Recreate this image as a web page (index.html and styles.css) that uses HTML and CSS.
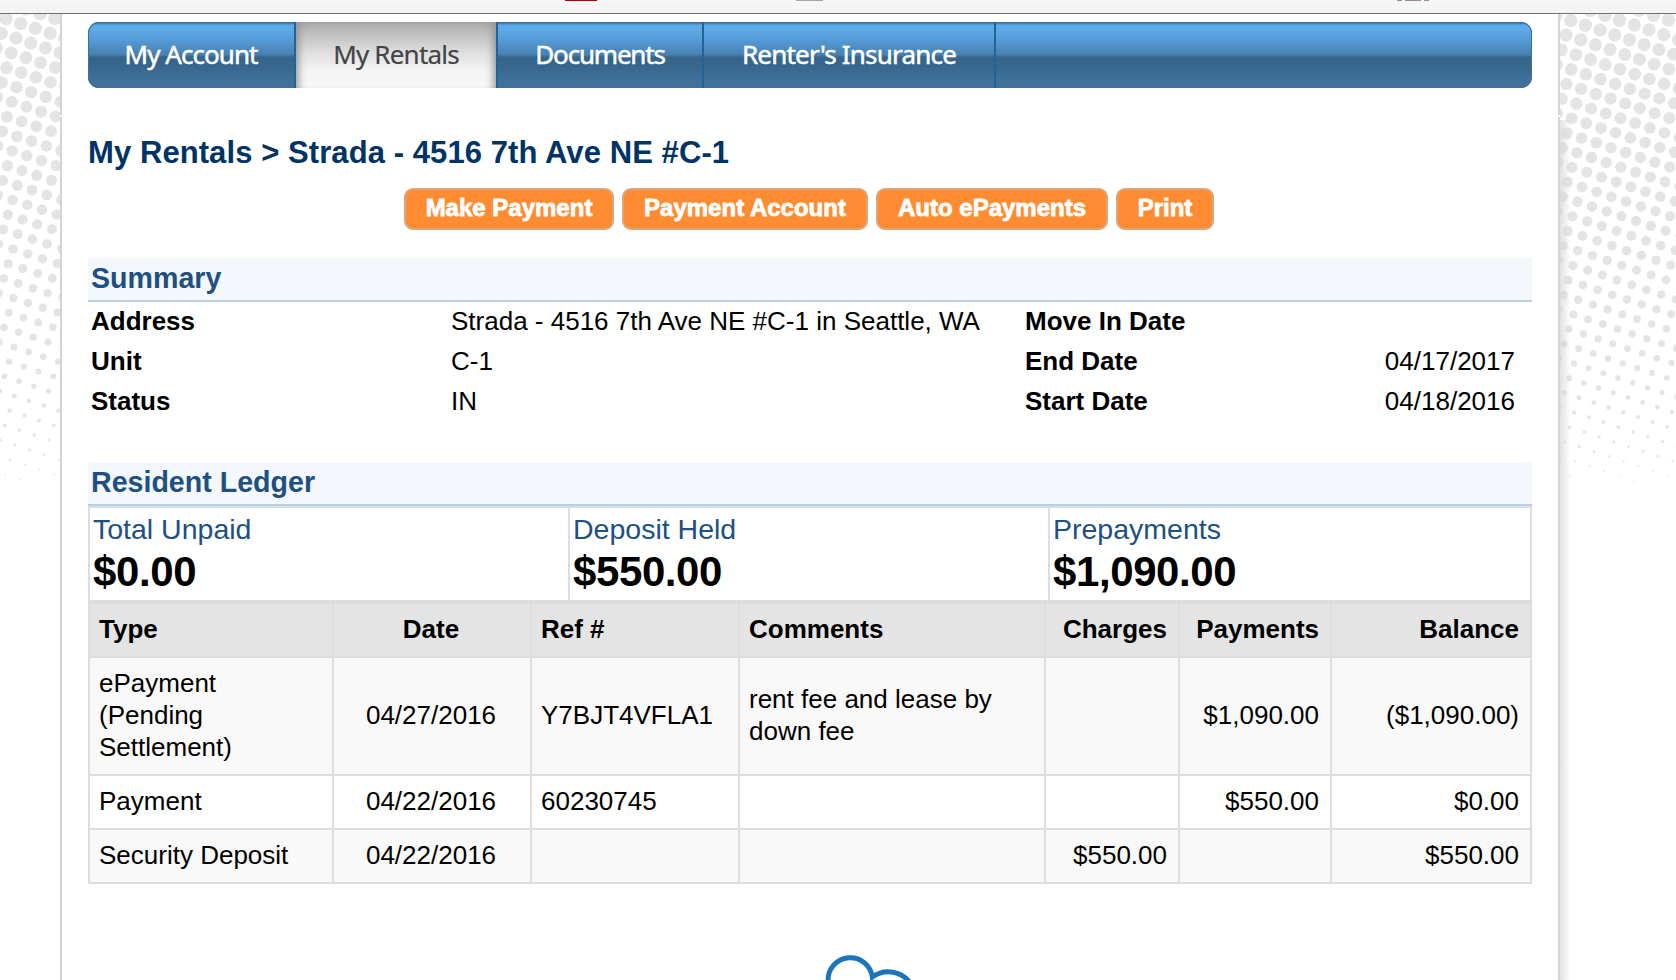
FILE: index.html
```html
<!DOCTYPE html>
<html lang="en">
<head>
<meta charset="utf-8">
<title>My Rentals</title>
<link rel="stylesheet" href="styles.css">
</head>
<body>
<div class="toolbar">
  <svg width="1676" height="13" viewBox="0 0 1676 13">
    <rect x="565" y="0" width="32" height="1" fill="#a30d10"/>
    <rect x="796" y="0" width="27" height="1" fill="#a5a5a5"/>
    <path d="M1397 0h5v1h-5zM1405 0h16v1h-16zM1424 0h5v1h-5z" fill="#9a8c86"/>
  </svg>
</div>
<div class="backdrop">
  <svg class="dots" id="dots" width="1676" height="966" viewBox="0 14 1676 966"></svg>
  <main class="page">
    <nav class="nav">
      <a class="tab tab-account"><span>My Account</span></a>
      <a class="tab tab-rentals active"><span>My Rentals</span></a>
      <a class="tab tab-documents"><span>Documents</span></a>
      <a class="tab tab-insurance"><span>Renter's Insurance</span></a>
    </nav>
    <h1 class="title"><span>My Rentals &gt; Strada - 4516 7th Ave NE #C-1</span></h1>
    <div class="actions">
      <button class="btn btn-make"><span>Make Payment</span></button>
      <button class="btn btn-account"><span>Payment Account</span></button>
      <button class="btn btn-auto"><span>Auto ePayments</span></button>
      <button class="btn btn-print"><span>Print</span></button>
    </div>
    <h2 class="section"><span>Summary</span></h2>
    <dl class="summary">
      <dt>Address</dt><dd><span>Strada - 4516 7th Ave NE #C-1 in Seattle, WA</span></dd><dt>Move In Date</dt><dd></dd>
      <dt>Unit</dt><dd>C-1</dd><dt>End Date</dt><dd class="num">04/17/2017</dd>
      <dt>Status</dt><dd>IN</dd><dt>Start Date</dt><dd class="num">04/18/2016</dd>
    </dl>
    <h2 class="section"><span>Resident Ledger</span></h2>
    <div class="totals">
      <div class="total"><span class="total-label">Total Unpaid</span><strong>$0.00</strong></div>
      <div class="total"><span class="total-label">Deposit Held</span><strong>$550.00</strong></div>
      <div class="total"><span class="total-label">Prepayments</span><strong>$1,090.00</strong></div>
    </div>
    <table class="ledger">
      <colgroup><col class="c-type"><col class="c-date"><col class="c-ref"><col class="c-comments"><col class="c-charges"><col class="c-payments"><col class="c-balance"></colgroup>
      <thead>
        <tr><th>Type</th><th class="mid">Date</th><th>Ref #</th><th>Comments</th><th class="num">Charges</th><th class="num">Payments</th><th class="num">Balance</th></tr>
      </thead>
      <tbody>
        <tr><td>ePayment<br>(Pending<br>Settlement)</td><td class="mid">04/27/2016</td><td>Y7BJT4VFLA1</td><td>rent fee and lease by<br>down fee</td><td></td><td class="num">$1,090.00</td><td class="num">($1,090.00)</td></tr>
        <tr><td>Payment</td><td class="mid">04/22/2016</td><td>60230745</td><td></td><td></td><td class="num">$550.00</td><td class="num">$0.00</td></tr>
        <tr><td>Security Deposit</td><td class="mid">04/22/2016</td><td></td><td></td><td class="num">$550.00</td><td></td><td class="num">$550.00</td></tr>
      </tbody>
    </table>
    <svg class="cloud" width="100" height="30" viewBox="820 950 100 30">
      <path d="M828.1 980.7 A22.2 22.2 0 0 1 872.3 977 A27.2 27.2 0 0 1 911 984" fill="none" stroke="#1c75bb" stroke-width="5"/>
    </svg>
  </main>
</div>
<script src="dots.js"></script>
</body>
</html>
```
FILE: styles.css
```css
* { box-sizing: border-box; }

body {
  margin: 0;
  height: 980px;
  overflow: hidden;
  background: #fff;
  color: #000;
  font: 26px/32px "Liberation Sans", Arial, sans-serif;
}

.toolbar {
  height: 14px;
  background: linear-gradient(#f7f7f7, #f3f3f3);
  border-bottom: 1px solid #717171;
}
.toolbar svg { display: block; }

.backdrop {
  position: relative;
  height: 966px;
  overflow: hidden;
}
.dots {
  position: absolute;
  left: 0;
  top: 0;
}

.page {
  position: relative;
  width: 1500px;
  height: 966px;
  margin-left: 60px;
  padding: 8px 26px 0;
  background: #fff;
  border: solid #d4d4d4;
  border-width: 0 2px;
}
/* soft shadow along the right side, below the header */
.page::after {
  content: "";
  position: absolute;
  left: 1498px;
  top: 106px;
  width: 11px;
  height: 860px;
  background: linear-gradient(90deg, rgba(215,215,215,.75), rgba(255,255,255,0));
}
/* seam between header and body borders */
.page::before {
  content: "";
  position: absolute;
  left: -2px;
  top: 101px;
  width: 1500px;
  height: 2px;
  background: #fff;
}

.nav {
  display: flex;
  height: 66px;
  border-radius: 11px;
  overflow: hidden;
  background: linear-gradient(#3f719c 0, #3f719c 1px, #5ba8e6 3px, #60acec 6px, #559bd6 18px, #4680b0 33px, #36658b 35px, #37678e 45px, #3f719b 58px, #3f719b 66px);
  box-shadow: inset 0 0 0 1px #3f719c;
}
.tab {
  display: flex;
  justify-content: center;
  border-right: 2px solid #236496;
  color: #fff;
  font: 26px/64px "Noto Sans", Tahoma, sans-serif;
  letter-spacing: -.95px;
  -webkit-text-stroke: .5px currentColor;
}
.tab-account { width: 208px; }
.tab-rentals { width: 202px; letter-spacing: -.8px; }
.tab-documents { width: 206px; letter-spacing: -1.2px; }
.tab-insurance { width: 292px; letter-spacing: -.8px; }
.tab.active {
  color: #444;
  background: linear-gradient(#a6a6a6, #b9b9b9 8px, #dedede 30px, #f4f4f4 48px, #f8f8f8);
  box-shadow: inset 9px 0 8px -7px #8c8c8c, inset -9px 0 8px -7px #8c8c8c;
  -webkit-text-stroke: .2px currentColor;
}

.title {
  margin: 44px 0 0;
  height: 42px;
  color: #036;
  font-size: 31px;
  line-height: 42px;
  letter-spacing: .08px;
  white-space: nowrap;
}

.actions {
  display: flex;
  gap: 8px;
  margin: 14px 0 0 316px;
}
.btn {
  height: 42px;
  padding: 0 0 2px;
  border: 2px solid #dca67c;
  border-radius: 9px;
  background: #ff8c32;
  color: #fff;
  font: bold 24px/34px "Liberation Sans", Arial, sans-serif;
  -webkit-text-stroke: .8px #fff;
}
.btn-make { width: 210px; }
.btn-account { width: 246px; }
.btn-auto { width: 232px; }
.btn-print { width: 98px; }

.section {
  margin: 28px 0 0;
  height: 44px;
  padding-left: 3px;
  background: #f4f7fc;
  border-bottom: 2px solid #b9d0e6;
  color: #205081;
  font-size: 28.6px;
  line-height: 40px;
}

.summary {
  display: grid;
  grid-template-columns: 360px 574px 300px 190px;
  grid-auto-rows: 40px;
  margin: 0;
  padding: 0 0 12px 3px;
  line-height: 38px;
  white-space: nowrap;
}
.summary dt { font-weight: bold; }
.summary dd { margin: 0; }
.num { text-align: right; }
.mid { text-align: center; }

.totals {
  display: grid;
  grid-template-columns: 478px 478px 480px;
  gap: 2px;
  height: 96px;
  border: 2px solid #ddd;
  background: #ddd;
}
.total {
  display: flex;
  flex-direction: column;
  padding: 4px 0 0 3px;
  background: #fff;
}
.total-label {
  color: #205081;
  font-size: 28.5px;
  line-height: 34px;
}
.total strong {
  font-size: 42px;
  letter-spacing: -.4px;
  line-height: 51px;
}

.summary + .section { margin-top: 28px; }

.ledger {
  width: 1444px;
  table-layout: fixed;
  border-collapse: collapse;
}
.c-type { width: 244px; }
.c-date { width: 198px; }
.c-ref { width: 208px; }
.c-comments { width: 306px; }
.c-charges { width: 134px; }
.c-payments { width: 152px; }
.c-balance { width: 200px; }
.ledger th, .ledger td {
  height: 54px;
  padding: 9px 11px 11px 9px;
  border: 2px solid #ddd;
  white-space: nowrap;
}
.ledger th { background: #e4e4e4; font-weight: bold; }
.ledger th:not(.num):not(.mid) { text-align: left; }
.ledger tbody tr:nth-child(odd) { background: #f9f9f9; }
.ledger .mid { padding-left: 8px; padding-right: 10px; }

.cloud {
  display: block;
  margin: 66px 0 0 732px;
}
```
FILE: dots.js
```js
// Halftone backdrop: a tilted dot lattice whose dots shrink down the page.
const stops = [[10, 6.8], [180, 5.5], [250, 4.8], [300, 4.2], [350, 3.4], [400, 2.4], [450, 1.4], [482, 0.7]];

function radius(y) {
  for (let k = 1; k < stops.length; k++) {
    const [y0, r0] = stops[k - 1];
    const [y1, r1] = stops[k];
    if (y <= y1) return r0 + (r1 - r0) * Math.max(0, (y - y0) / (y1 - y0));
  }
  return 0;
}

function lattice(ox, oy, minX, maxX) {
  let out = "";
  for (let i = -40; i < 40; i++) {
    for (let j = -40; j < 40; j++) {
      const x = ox + i * 14.7 - j * 4.75;
      const y = oy + i * 4.85 + j * 14.72;
      if (x < minX || x > maxX || y < 6 || y > 481) continue;
      out += `<circle cx="${x.toFixed(1)}" cy="${y.toFixed(1)}" r="${radius(y).toFixed(2)}"/>`;
    }
  }
  return out;
}

document.getElementById("dots").innerHTML =
  `<g fill="#e4e4e4">${lattice(13, 249, -8, 66)}${lattice(1577.7, 250.7, 1552, 1684)}</g>`;
```
